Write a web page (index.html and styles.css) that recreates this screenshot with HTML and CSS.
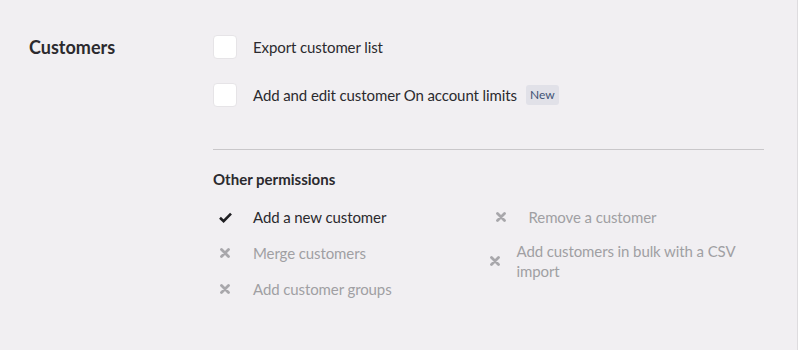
FILE: index.html
```html
<!DOCTYPE html>
<html lang="en">
<head>
    <meta charset="UTF-8">
    <title>Customer permissions</title>
    <link rel="stylesheet" href="styles.css">
</head>
<body>

<div class="section">
    <h2 class="section-title">Customers</h2>
    <div class="section-body">
        <label class="option">
            <span class="checkbox"></span>
            <span class="option-text">Export customer list</span>
        </label>
        <label class="option">
            <span class="checkbox"></span>
            <span class="option-text">Add and edit customer On account limits</span>
            <span class="badge">New</span>
        </label>

        <hr class="divider">

        <h3 class="sub-title">Other permissions</h3>
        <div class="perm-grid">
            <div class="perm-col">
                <div class="perm">
                    <span class="perm-icon">
                        <svg width="13" height="11" viewBox="0 0 13 11"><path d="M1 5.8 L4.6 9.2 L12 1.6" fill="none" stroke="#1f1f22" stroke-width="2.6"/></svg>
                    </span>
                    <span class="perm-text">Add a new customer</span>
                </div>
                <div class="perm off">
                    <span class="perm-icon">
                        <svg width="10" height="10" viewBox="0 0 10 10"><path d="M1.5 1.5 L8.5 8.5 M8.5 1.5 L1.5 8.5" stroke="#a8a7ab" stroke-width="2.8" stroke-linecap="round"/></svg>
                    </span>
                    <span class="perm-text">Merge customers</span>
                </div>
                <div class="perm off">
                    <span class="perm-icon">
                        <svg width="10" height="10" viewBox="0 0 10 10"><path d="M1.5 1.5 L8.5 8.5 M8.5 1.5 L1.5 8.5" stroke="#a8a7ab" stroke-width="2.8" stroke-linecap="round"/></svg>
                    </span>
                    <span class="perm-text">Add customer groups</span>
                </div>
            </div>
            <div class="perm-col">
                <div class="perm off">
                    <span class="perm-icon">
                        <svg width="10" height="10" viewBox="0 0 10 10"><path d="M1.5 1.5 L8.5 8.5 M8.5 1.5 L1.5 8.5" stroke="#a8a7ab" stroke-width="2.8" stroke-linecap="round"/></svg>
                    </span>
                    <span class="perm-text">Remove a customer</span>
                </div>
                <div class="perm off wrap">
                    <span class="perm-icon">
                        <svg width="10" height="10" viewBox="0 0 10 10"><path d="M1.5 1.5 L8.5 8.5 M8.5 1.5 L1.5 8.5" stroke="#a8a7ab" stroke-width="2.8" stroke-linecap="round"/></svg>
                    </span>
                    <span class="perm-text">Add customers in bulk with a CSV import</span>
                </div>
            </div>
        </div>
    </div>
</div>

</body>
</html>
```

FILE: styles.css
```css
body, html {
    height: 100%;
    margin: 0;
    font-family: Lato, "Open Sans", sans-serif;
    background-color: #f1eff2;
    color: #2b2a2e;
}

body {
    box-sizing: border-box;
    border-right: 1px solid #dedcdf;
}

.section {
    display: flex;
    padding: 35px 33px 0 29px;
}

.section-title {
    width: 184px;
    margin: 0;
    font-size: 18px;
    font-weight: 700;
    line-height: 24px;
}

.section-body {
    flex: 1;
}

.option {
    display: flex;
    align-items: center;
    height: 24px;
    margin-bottom: 24px;
    font-size: 15px;
    letter-spacing: -0.1px;
}

.checkbox {
    width: 22px;
    height: 22px;
    background-color: white;
    border: 1px solid #e6e4e7;
    border-radius: 4px;
    margin-right: 16px;
}

.badge {
    margin-left: 9px;
    padding: 2px 4px;
    font-size: 12px;
    line-height: 16px;
    letter-spacing: 0;
    color: #3f5275;
    background-color: #e1e1e8;
    border-radius: 3px;
}

.divider {
    border: none;
    border-top: 1px solid #c9c7ca;
    margin: 42px 0 19px;
}

.sub-title {
    margin: 0 0 10px;
    font-size: 15px;
    font-weight: 700;
    line-height: 20px;
}

.perm-grid {
    display: grid;
    grid-template-columns: 1fr 1fr;
}

.perm {
    display: flex;
    align-items: center;
    padding: 8px 0;
    font-size: 15px;
    line-height: 20px;
    letter-spacing: -0.1px;
}

.perm-icon {
    flex: 0 0 24px;
    display: flex;
    justify-content: center;
    margin-right: 16px;
}

.perm.off {
    color: #a09fa3;
}

.perm.wrap {
    margin-top: -2px;
}

.perm.wrap .perm-icon {
    flex-basis: 12px;
}
```
